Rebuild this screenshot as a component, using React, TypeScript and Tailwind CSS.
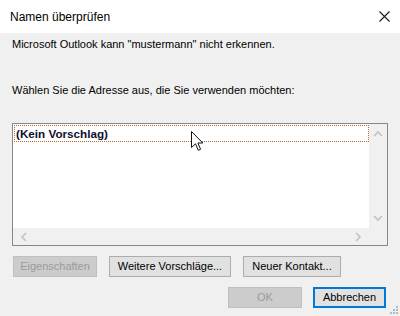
import { ReactNode } from 'react';

const font = { fontFamily: '"Liberation Sans", Arial, sans-serif' };

function Chevron({ dir }: { dir: 'up' | 'down' | 'left' | 'right' }) {
  const d = {
    up: 'M1 6 L5 2 L9 6',
    down: 'M1 2 L5 6 L9 2',
    left: 'M6 1 L2 5 L6 9',
    right: 'M2 1 L6 5 L2 9',
  }[dir];
  const vertical = dir === 'up' || dir === 'down';
  return (
    <svg width={vertical ? 10 : 8} height={vertical ? 8 : 10} viewBox={vertical ? '0 0 10 8' : '0 0 8 10'}>
      <path d={d} fill="none" stroke="#c2c2c2" strokeWidth="1.6" />
    </svg>
  );
}

function Btn({ children, disabled, primary, className }: { children: ReactNode; disabled?: boolean; primary?: boolean; className?: string }) {
  return (
    <div
      className={
        'flex items-center justify-center h-[21px] text-[11px] leading-none ' +
        (disabled
          ? 'bg-[#cccccc] border border-[#bfbfbf] text-[#9a9a9a] '
          : primary
          ? 'bg-[#e1e1e1] border-2 border-[#0078d7] text-black '
          : 'bg-[#e1e1e1] border border-[#adadad] text-black ') +
        (className ?? '')
      }
    >
      {children}
    </div>
  );
}

export default function App() {
  return (
    <div className="relative w-[400px] h-[316px] bg-[#f0f0f0] flex flex-col overflow-hidden" style={font}>
      {/* Titelleiste */}
      <div className="h-[33px] bg-white flex items-center justify-between pl-[10px] pr-[10px] shrink-0">
        <span className="text-[12px] text-black">Namen überprüfen</span>
        <svg width="11" height="11" viewBox="0 0 11 11">
          <path d="M0.5 0.5 L10.5 10.5 M10.5 0.5 L0.5 10.5" stroke="#1a1a1a" strokeWidth="1.1" />
        </svg>
      </div>

      <div className="flex flex-col px-[12px]">
        <div className="h-[16px] mt-[3px] text-[11px] leading-[16px] text-black">
          Microsoft Outlook kann "mustermann" nicht erkennen.
        </div>
        <div className="h-[16px] mt-[30px] text-[11px] leading-[16px] text-black">
          Wählen Sie die Adresse aus, die Sie verwenden möchten:
        </div>

        {/* Liste */}
        <div className="mt-[25px] w-[376px] h-[123px] border border-[#828790] flex flex-col">
          <div className="flex flex-1">
            <div className="flex-1 bg-white pt-[1px] pl-[1px]">
              <div className="h-[17px] border border-dotted border-[#c0651a] flex items-center pl-[1px] text-[11.7px] font-bold text-[#101030]">
                (Kein Vorschlag)
              </div>
            </div>
            <div className="w-[18px] bg-[#f0f0f0] flex flex-col items-center justify-between py-[6px]">
              <Chevron dir="up" />
              <Chevron dir="down" />
            </div>
          </div>
          <div className="h-[17px] bg-[#f0f0f0] flex items-center justify-between pl-[7px] pr-[25px]">
            <Chevron dir="left" />
            <Chevron dir="right" />
          </div>
        </div>

        {/* Schaltflächen */}
        <div className="flex mt-[10px] ml-[1px] gap-[12px]">
          <Btn disabled className="w-[84px]">Eigenschaften</Btn>
          <Btn className="w-[122px]">Weitere Vorschläge...</Btn>
          <Btn className="w-[98px]">Neuer Kontakt...</Btn>
        </div>
        <div className="flex justify-end mt-[10px] gap-[11px] pr-[2px]">
          <Btn disabled className="w-[74px]">OK</Btn>
          <Btn primary className="w-[73px]">Abbrechen</Btn>
        </div>
      </div>

      {/* Größengriff */}
      <svg className="absolute right-[2px] bottom-[2px]" width="8" height="8" viewBox="0 0 8 8">
        <rect x="6" y="0" width="2" height="2" fill="#b8b8b8" />
        <rect x="3" y="3" width="2" height="2" fill="#b8b8b8" />
        <rect x="6" y="3" width="2" height="2" fill="#b8b8b8" />
        <rect x="0" y="6" width="2" height="2" fill="#b8b8b8" />
        <rect x="3" y="6" width="2" height="2" fill="#b8b8b8" />
        <rect x="6" y="6" width="2" height="2" fill="#b8b8b8" />
      </svg>

      {/* Mauszeiger */}
      <svg className="absolute left-[191px] top-[131px]" width="13" height="21" viewBox="0 0 13 21">
        <path d="M0.5 0.5 L0.5 16.5 L4.5 12.8 L7.3 19.3 L9.6 18.3 L6.9 12 L11.8 12 Z" fill="white" stroke="#111" strokeWidth="1" strokeLinejoin="round" />
      </svg>
    </div>
  );
}
